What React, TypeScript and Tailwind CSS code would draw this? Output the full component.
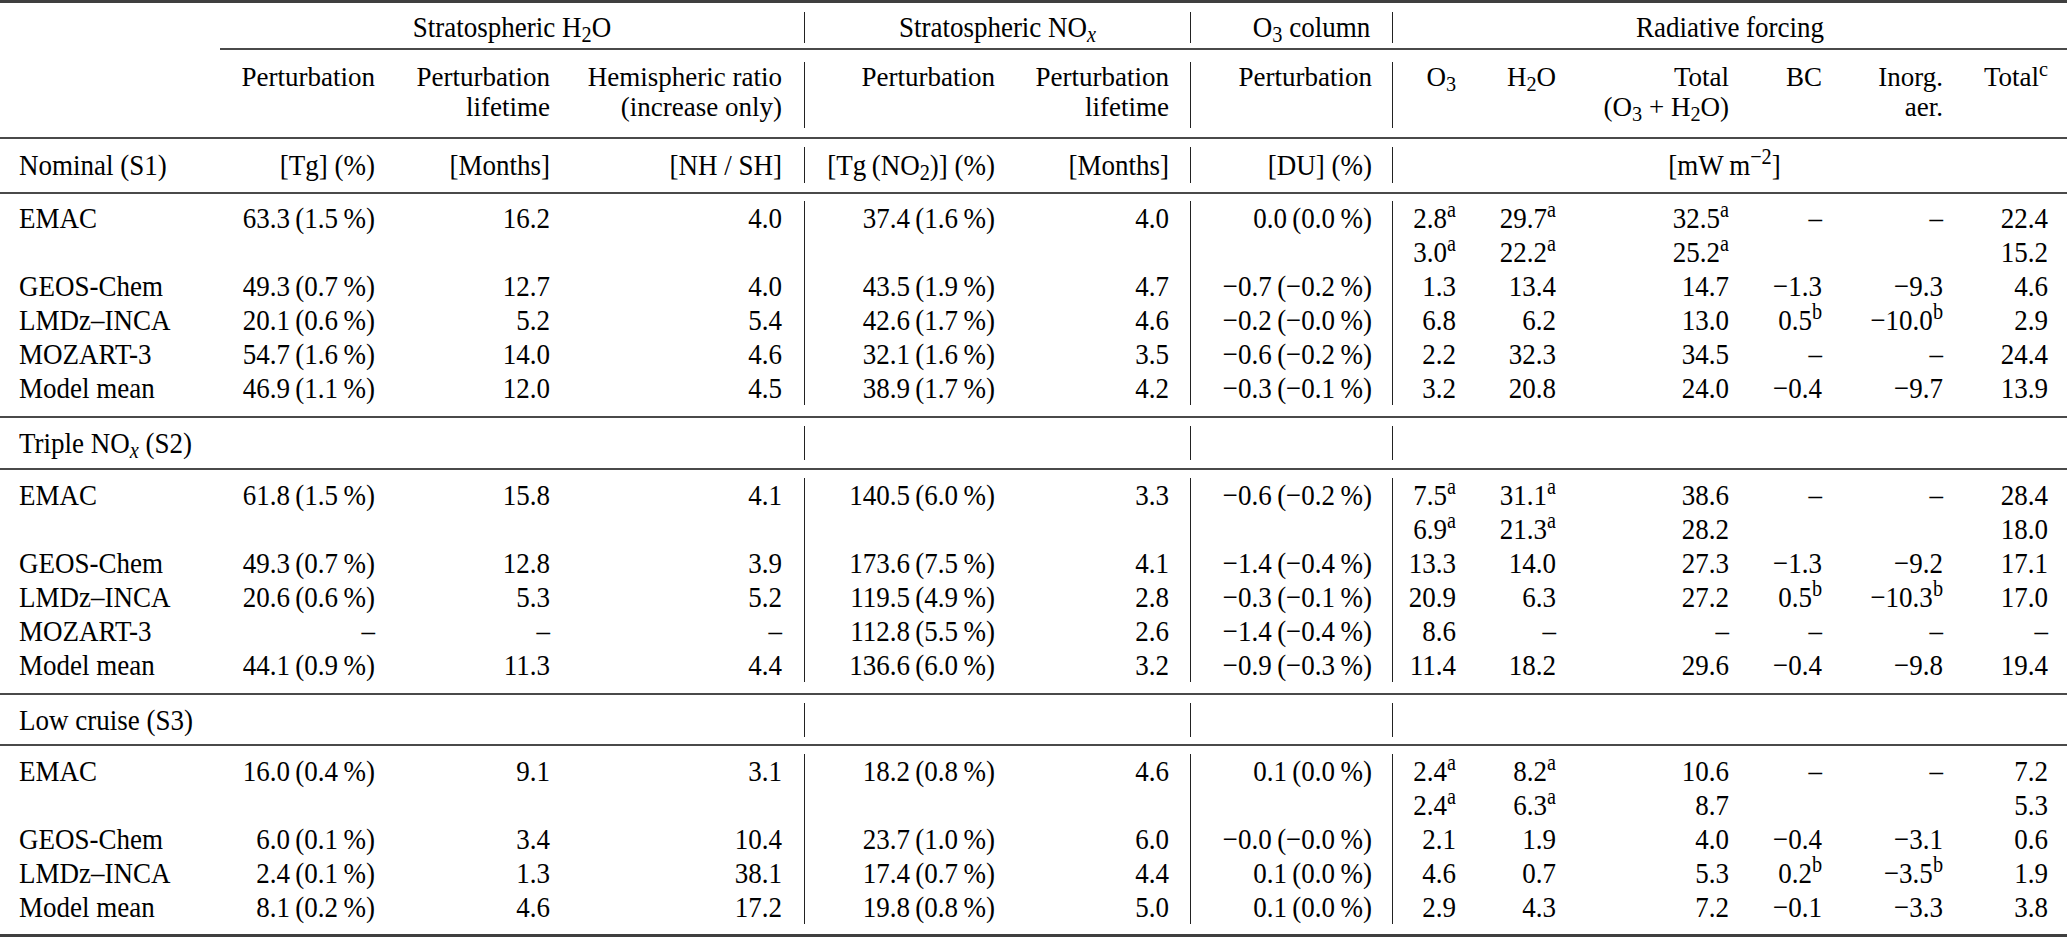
import type { ReactNode } from 'react';

const GRID = "grid grid-cols-[220px_170px_175px_239px_206px_180px_202px_78px_100px_175px_90px_120px_112px]";

// per-column alignment, padding and the vertical rules before NOx, O3 column and forcing
const COLS = [
  "pl-[19px] text-left whitespace-nowrap",
  "pr-[15px] text-right whitespace-nowrap",
  "pr-[15px] text-right whitespace-nowrap",
  "pr-[22px] text-right whitespace-nowrap",
  "pr-[15px] text-right whitespace-nowrap border-l border-[#222]",
  "pr-[21px] text-right whitespace-nowrap",
  "pr-[20px] text-right whitespace-nowrap border-l border-[#222]",
  "pr-[14px] text-right whitespace-nowrap border-l border-[#222]",
  "pr-[14px] text-right whitespace-nowrap",
  "pr-[16px] text-right whitespace-nowrap",
  "pr-[13px] text-right whitespace-nowrap",
  "pr-[12px] text-right whitespace-nowrap",
  "pr-[19px] text-right whitespace-nowrap",
];

const T = ({ children }: { children?: ReactNode }) => (
  <span className="inline-block scale-y-[1.1]">{children}</span>
);

const Val = ({ v }: { v: string }) => {
  const [base, sup] = v.split('^');
  return <>{base}{sup && <sup>{sup}</sup>}</>;
};

const Gap = ({ h }: { h: string }) => <div className={h} />;
const MidRule = () => <div className="h-[2px] bg-[#4a4a4a]" />;
const ThickRule = () => <div className="h-[3px] bg-[#3f3f3f]" />;

const NOx = () => <>NO<sub><i>x</i></sub></>;
const H2O = () => <>H<sub>2</sub>O</>;
const O3 = () => <>O<sub>3</sub></>;

function DataRow({ cells }: { cells: ReactNode[] }) {
  return (
    <div className={`${GRID} h-[34px] leading-[34px]`}>
      {cells.map((c, i) => (
        <div key={i} className={COLS[i]}>
          <T>{typeof c === 'string' ? <Val v={c} /> : c}</T>
        </div>
      ))}
    </div>
  );
}

const p = (a: string, b: string) => `${a}\u2009(${b}\u2009%)`;

const S1: string[][] = [
  ["EMAC", p("63.3", "1.5"), "16.2", "4.0", p("37.4", "1.6"), "4.0", p("0.0", "0.0"), "2.8^a", "29.7^a", "32.5^a", "–", "–", "22.4"],
  ["", "", "", "", "", "", "", "3.0^a", "22.2^a", "25.2^a", "", "", "15.2"],
  ["GEOS-Chem", p("49.3", "0.7"), "12.7", "4.0", p("43.5", "1.9"), "4.7", p("−0.7", "−0.2"), "1.3", "13.4", "14.7", "−1.3", "−9.3", "4.6"],
  ["LMDz–INCA", p("20.1", "0.6"), "5.2", "5.4", p("42.6", "1.7"), "4.6", p("−0.2", "−0.0"), "6.8", "6.2", "13.0", "0.5^b", "−10.0^b", "2.9"],
  ["MOZART-3", p("54.7", "1.6"), "14.0", "4.6", p("32.1", "1.6"), "3.5", p("−0.6", "−0.2"), "2.2", "32.3", "34.5", "–", "–", "24.4"],
  ["Model mean", p("46.9", "1.1"), "12.0", "4.5", p("38.9", "1.7"), "4.2", p("−0.3", "−0.1"), "3.2", "20.8", "24.0", "−0.4", "−9.7", "13.9"],
];

const S2: string[][] = [
  ["EMAC", p("61.8", "1.5"), "15.8", "4.1", p("140.5", "6.0"), "3.3", p("−0.6", "−0.2"), "7.5^a", "31.1^a", "38.6", "–", "–", "28.4"],
  ["", "", "", "", "", "", "", "6.9^a", "21.3^a", "28.2", "", "", "18.0"],
  ["GEOS-Chem", p("49.3", "0.7"), "12.8", "3.9", p("173.6", "7.5"), "4.1", p("−1.4", "−0.4"), "13.3", "14.0", "27.3", "−1.3", "−9.2", "17.1"],
  ["LMDz–INCA", p("20.6", "0.6"), "5.3", "5.2", p("119.5", "4.9"), "2.8", p("−0.3", "−0.1"), "20.9", "6.3", "27.2", "0.5^b", "−10.3^b", "17.0"],
  ["MOZART-3", "–", "–", "–", p("112.8", "5.5"), "2.6", p("−1.4", "−0.4"), "8.6", "–", "–", "–", "–", "–"],
  ["Model mean", p("44.1", "0.9"), "11.3", "4.4", p("136.6", "6.0"), "3.2", p("−0.9", "−0.3"), "11.4", "18.2", "29.6", "−0.4", "−9.8", "19.4"],
];

const S3: string[][] = [
  ["EMAC", p("16.0", "0.4"), "9.1", "3.1", p("18.2", "0.8"), "4.6", p("0.1", "0.0"), "2.4^a", "8.2^a", "10.6", "–", "–", "7.2"],
  ["", "", "", "", "", "", "", "2.4^a", "6.3^a", "8.7", "", "", "5.3"],
  ["GEOS-Chem", p("6.0", "0.1"), "3.4", "10.4", p("23.7", "1.0"), "6.0", p("−0.0", "−0.0"), "2.1", "1.9", "4.0", "−0.4", "−3.1", "0.6"],
  ["LMDz–INCA", p("2.4", "0.1"), "1.3", "38.1", p("17.4", "0.7"), "4.4", p("0.1", "0.0"), "4.6", "0.7", "5.3", "0.2^b", "−3.5^b", "1.9"],
  ["Model mean", p("8.1", "0.2"), "4.6", "17.2", p("19.8", "0.8"), "5.0", p("0.1", "0.0"), "2.9", "4.3", "7.2", "−0.1", "−3.3", "3.8"],
];

const blank = (title: ReactNode): ReactNode[] => [title, "", "", "", "", "", "", "", "", "", "", "", ""];

export default function App() {
  return (
    <div className="font-serif">
    <div className="w-[2067px] h-[937px] overflow-hidden bg-white text-black font-[family-name:Liberation_Serif] text-[27px]">
      <ThickRule />
      <Gap h="h-[9px]" />

      {/* group headers */}
      <div className={`${GRID} h-[31px] leading-[31px]`}>
        <div />
        <div className="col-span-3 text-center"><T>Stratospheric <H2O /></T></div>
        <div className="col-span-2 text-center border-l border-[#222]"><T>Stratospheric <NOx /></T></div>
        <div className="text-center pl-[40px] border-l border-[#222] whitespace-nowrap"><T><O3 /> column</T></div>
        <div className="col-span-6 text-center border-l border-[#222]"><T>Radiative forcing</T></div>
      </div>

      <Gap h="h-[5px]" />
      <div className="ml-[220px] h-[2px] bg-[#4a4a4a]" />
      <Gap h="h-[12px]" />

      {/* column headers: two-line cells, no vertical stretch so lines don't collide */}
      <div className={`${GRID} h-[66px] leading-[30px]`}>
        <div className={COLS[0]} />
        <div className={COLS[1]}>Perturbation</div>
        <div className={COLS[2]}>Perturbation<br />lifetime</div>
        <div className={COLS[3]}>Hemispheric ratio<br />(increase only)</div>
        <div className={COLS[4]}>Perturbation</div>
        <div className={COLS[5]}>Perturbation<br />lifetime</div>
        <div className={COLS[6]}>Perturbation</div>
        <div className={COLS[7]}><O3 /></div>
        <div className={COLS[8]}><H2O /></div>
        <div className={COLS[9]}>Total<br />(<O3 /> + <H2O />)</div>
        <div className={COLS[10]}>BC</div>
        <div className={COLS[11]}>Inorg.<br />aer.</div>
        <div className={COLS[12]}>Total<sup>c</sup></div>
      </div>

      <Gap h="h-[9px]" />
      <MidRule />
      <Gap h="h-[8px]" />

      {/* units */}
      <div className={`${GRID} h-[36px] leading-[36px]`}>
        <div className={COLS[0]}><T>Nominal (S1)</T></div>
        <div className={COLS[1]}><T>[Tg] (%)</T></div>
        <div className={COLS[2]}><T>[Months]</T></div>
        <div className={COLS[3]}><T>[NH / SH]</T></div>
        <div className={COLS[4]}><T>[Tg{'\u2009'}(NO<sub>2</sub>)] (%)</T></div>
        <div className={COLS[5]}><T>[Months]</T></div>
        <div className={COLS[6]}><T>[DU] (%)</T></div>
        <div className="col-span-6 text-center pr-[11px] border-l border-[#222]"><T>[mW{'\u2009'}m<sup>−2</sup>]</T></div>
      </div>

      <Gap h="h-[9px]" />
      <MidRule />
      <Gap h="h-[7px]" />

      {S1.map((r, i) => <DataRow key={i} cells={r} />)}

      <Gap h="h-[11px]" />
      <MidRule />
      <Gap h="h-[8px]" />

      <DataRow cells={blank(<>Triple <NOx /> (S2)</>)} />

      <Gap h="h-[8px]" />
      <MidRule />
      <Gap h="h-[8px]" />

      {S2.map((r, i) => <DataRow key={i} cells={r} />)}

      <Gap h="h-[11px]" />
      <MidRule />
      <Gap h="h-[8px]" />

      <DataRow cells={blank("Low cruise (S3)")} />

      <Gap h="h-[7px]" />
      <MidRule />
      <Gap h="h-[8px]" />

      {S3.map((r, i) => <DataRow key={i} cells={r} />)}

      <Gap h="h-[10px]" />
      <ThickRule />
    </div>
    </div>
  );
}
